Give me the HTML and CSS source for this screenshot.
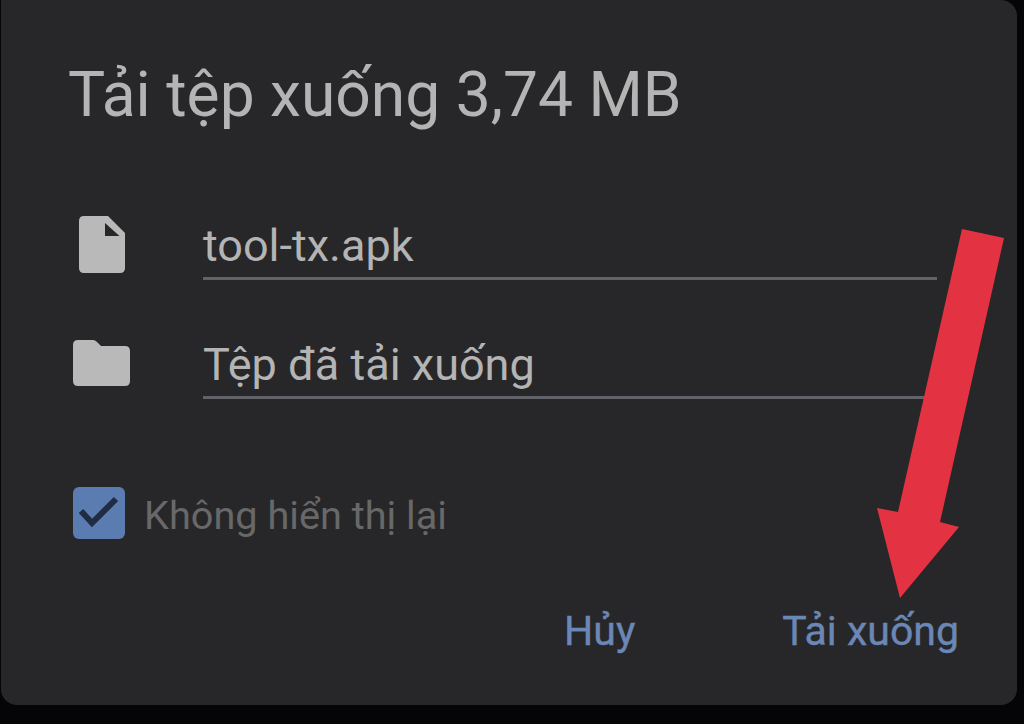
FILE: index.html
```html
<!DOCTYPE html>
<html lang="vi">
<head>
  <meta charset="UTF-8">
  <title>Tải tệp xuống</title>
  <link rel="stylesheet" href="styles.css">
</head>
<body>
  <div class="dialog">
    <h1 class="title">Tải tệp xuống 3,74 MB</h1>

    <div class="field field-file">
      <svg class="icon icon-file" viewBox="0 0 46 58">
        <path fill="#b9b9b9" d="M5 0H29L46 17V52Q46 57 41 57H5Q0 57 0 52V5Q0 0 5 0Z"/>
        <path fill="#272729" d="M26 7V20H40.500Z"/>
      </svg>
      <div class="input">tool-tx.apk</div>
    </div>

    <div class="field field-folder">
      <svg class="icon icon-folder" viewBox="0 0 57 46">
        <path fill="#b9b9b9" d="M5 0H20Q22 0 24 2L28 6H52Q57 6 57 11V41Q57 46 52 46H5Q0 46 0 41V5Q0 0 5 0Z"/>
      </svg>
      <div class="input">Tệp đã tải xuống</div>
    </div>

    <div class="remember">
      <div class="checkbox">
        <svg viewBox="0 0 52 52">
          <path fill="none" stroke="#1f2c44" stroke-width="6" d="M8 24L19 36L43 12"/>
        </svg>
      </div>
      <span class="remember-label">Không hiển thị lại</span>
    </div>

    <div class="actions">
      <span class="action">Hủy</span>
      <span class="action">Tải xuống</span>
    </div>
  </div>

  <svg class="arrow" viewBox="0 0 1024 724">
    <polygon fill="#e33342" points="962,229 1004,238 940,522 959,527 900,598 877,508 898,512"/>
  </svg>
</body>
</html>
```

FILE: styles.css
```css
html, body {
  margin: 0;
  height: 100%;
}
body {
  width: 1024px;
  height: 724px;
  overflow: hidden;
  background: #050507;
  font-family: Roboto, sans-serif;
}
.dialog {
  box-sizing: border-box;
  width: 1016px;
  height: 705px;
  margin-left: 1px;
  padding: 57px 80px 0 67px;
  background: #272729;
  border-radius: 0 16px 16px 16px;
}
.title {
  margin: 0;
  font-size: 62.300px;
  line-height: 76px;
  font-weight: 400;
  color: #b4b4b4;
}
.field {
  display: flex;
  align-items: flex-start;
}
.field-file {
  margin-top: 85px;
}
.field-folder {
  margin-top: 57px;
}
.icon {
  flex: none;
  display: block;
}
.icon-file {
  width: 46px;
  height: 58px;
  margin: -2px 78px 0 11px;
}
.icon-folder {
  width: 57px;
  height: 46px;
  margin: 3px 73px 0 5px;
}
.input {
  flex: 1;
  height: 59px;
  font-size: 45px;
  line-height: 56px;
  color: #b4b4b4;
  border-bottom: 3px solid #626368;
}
.remember {
  display: flex;
  align-items: center;
  margin-top: 88px;
  margin-left: 5px;
}
.checkbox {
  width: 52px;
  height: 52px;
  border-radius: 6px;
  background: #5b7cb1;
}
.checkbox svg {
  display: block;
}
.remember-label {
  margin: 4px 0 0 19px;
  font-size: 39.700px;
  color: #686868;
}
.actions {
  display: flex;
  justify-content: flex-end;
  gap: 147px;
  margin-top: 68px;
  margin-right: -22px;
}
.action {
  font-size: 41px;
  color: #6b87b5;
  -webkit-text-stroke: 0.4px #6b87b5;
}
.arrow {
  position: absolute;
  left: 0;
  top: 0;
  width: 1024px;
  height: 724px;
}
```
